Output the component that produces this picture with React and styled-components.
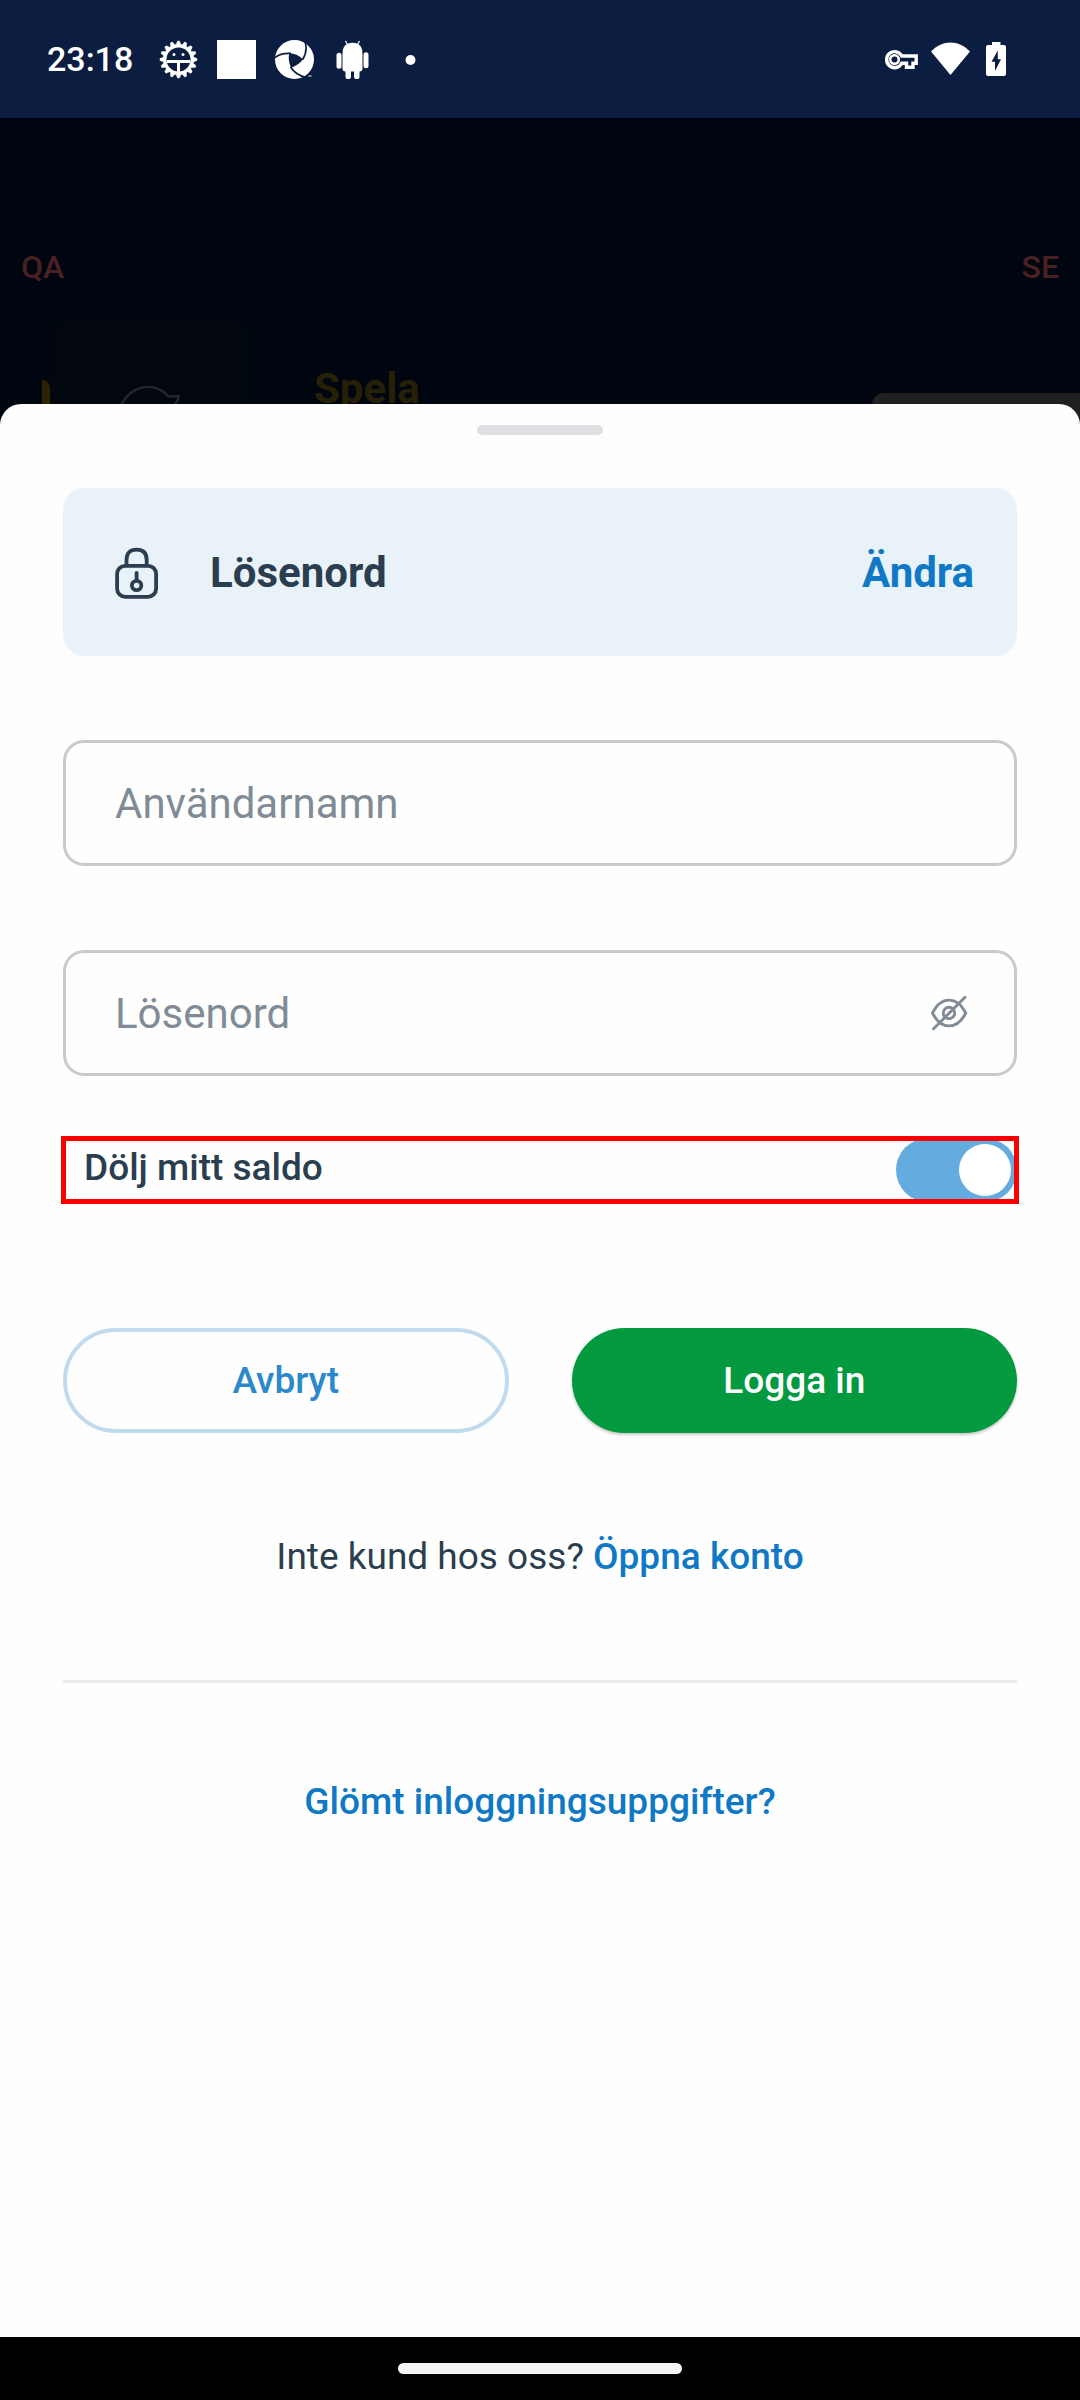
import React, { useState } from "react";
import styled, { createGlobalStyle, css } from "styled-components";

const color = {
  navy: "#0b1d40",
  backdrop: "#000610",
  sheet: "#fefefe",
  ink: "#2b3e50",
  muted: "#808b96",
  link: "#0f79c6",
  pale: "#e9f2f9",
};

const GlobalStyle = createGlobalStyle`
  *, *::before, *::after { box-sizing: border-box; }
  body {
    margin: 0;
    background: #000;
    color: ${color.ink};
    font-family: Roboto, "Liberation Sans", sans-serif;
  }
  button, input { font: inherit; }
`;

const Screen = styled.div`
  min-height: 100vh;
  display: flex;
  flex-direction: column;
`;

const StatusBar = styled.header`
  display: flex;
  justify-content: space-between;
  align-items: center;
  height: 118px;
  padding: 0 68px 0 47px;
  background: ${color.navy};
  color: #fff;
`;

const StatusGroup = styled.div`
  display: flex;
  align-items: center;
  gap: ${(p) => p.$gap}px;
`;

const Clock = styled.time`
  width: 93px;
  font-size: 34px;
  line-height: 44px;
  font-weight: 500;
  white-space: nowrap;
`;

const Glyph = styled.svg`
  display: block;
  flex: none;
  width: ${(p) => p.$w || 39}px;
  height: ${(p) => p.$h || 39}px;
`;

const Backdrop = styled.div`
  height: 307px;
  padding-top: 130px;
  overflow: hidden;
  background: ${color.backdrop};
`;

const EnvRow = styled.div`
  display: flex;
  justify-content: space-between;
  padding: 0 21px;
  color: #4a2023;
  font-size: 32px;
  line-height: 38px;
  font-weight: 500;
`;

const PromoRow = styled.div`
  display: flex;
  align-items: flex-start;
  padding: 33px 0 0 42px;
`;

const PromoMark = styled.div`
  width: 8px;
  height: 50px;
  margin-top: 61px;
  border-top-right-radius: 8px;
  background: #2a2403;
`;

const PromoTile = styled.div`
  display: flex;
  justify-content: center;
  width: 200px;
  height: 160px;
  padding-top: 67px;
  border-radius: 21px;
  background: #02060d;
`;

const PromoTitle = styled.div`
  margin: 45px 0 0 64px;
  color: #262007;
  font-size: 42px;
  line-height: 50px;
  font-weight: 700;
`;

const PromoPanel = styled.div`
  width: 208px;
  height: 90px;
  margin: 74px 0 0 auto;
  border-top-left-radius: 12px;
  background: #202020;
`;

const Sheet = styled.main`
  position: relative;
  flex: 1;
  display: flex;
  flex-direction: column;
  margin-top: -21px;
  padding: 21px 63px 63px;
  border-radius: 21px 21px 0 0;
  background: ${color.sheet};
`;

const Grabber = styled.div`
  align-self: center;
  width: 126px;
  height: 10px;
  border-radius: 5px;
  background: #dfe0e3;
`;

const MethodCard = styled.section`
  display: flex;
  align-items: center;
  height: 168px;
  margin-top: 53px;
  padding: 1px 43px 0 52px;
  border-radius: 21px;
  background: ${color.pale};
`;

const MethodTitle = styled.h1`
  flex: 1;
  margin: 0 0 0 51px;
  font-size: 42px;
  line-height: 50px;
  font-weight: 700;
`;

const textLink = css`
  color: ${color.link};
  text-decoration: none;
`;

const ChangeLink = styled.a`
  ${textLink}
  font-size: 42px;
  line-height: 50px;
  font-weight: 700;
`;

const Form = styled.form`
  display: flex;
  flex-direction: column;
  margin-bottom: 102px;
`;

const Field = styled.div`
  display: flex;
  align-items: center;
  height: 126px;
  margin-top: 84px;
  padding: 0 46px 0 49px;
  border: 3px solid #cacaca;
  border-radius: 21px;
`;

const TextInput = styled.input`
  flex: 1;
  min-width: 0;
  padding: 2px 0 0;
  border: 0;
  outline: 0;
  background: transparent;
  color: ${color.ink};
  font-size: 42px;
  line-height: 50px;

  &::placeholder {
    color: ${color.muted};
    opacity: 1;
  }
`;

const IconButton = styled.button`
  display: flex;
  padding: 0;
  border: 0;
  background: none;
  color: ${color.muted};
  cursor: pointer;
`;

const ToggleRow = styled.label`
  display: flex;
  justify-content: space-between;
  align-items: flex-start;
  height: 64px;
  margin-top: 62px;
  padding-left: 21px;
  outline: 5px solid #f80000;
  outline-offset: -3px;
  font-size: 37px;
  line-height: 60px;
  font-weight: 500;
`;

const Switch = styled.input.attrs({ type: "checkbox", role: "switch" })`
  appearance: none;
  display: flex;
  align-items: center;
  justify-content: flex-start;
  width: 121px;
  height: 64px;
  margin: 0;
  padding: 0 6px;
  border-radius: 32px;
  background: #c4ccd4;
  cursor: pointer;

  &::before {
    content: "";
    width: 52px;
    height: 52px;
    border-radius: 50%;
    background: #fff;
  }

  &:checked {
    justify-content: flex-end;
    background: #64abe0;
  }
`;

const Actions = styled.div`
  display: grid;
  grid-template-columns: 1fr 1fr;
  gap: 63px;
  margin-top: 126px;
`;

const PillButton = styled.button`
  height: 105px;
  padding: 0;
  border-radius: 53px;
  font-size: 37px;
  line-height: 44px;
  font-weight: 500;
  cursor: pointer;
  ${(p) =>
    p.$primary
      ? css`
          border: 0;
          background: #039a3f;
          color: #fff;
          box-shadow: 0 2px 3px rgba(0, 0, 0, 0.22);
        `
      : css`
          border: 4px solid #c1dbee;
          background: transparent;
          color: #2b88cc;
        `}
`;

const Prompt = styled.p`
  margin: 0;
  font-size: 37px;
  line-height: 44px;
  text-align: center;
`;

const StrongLink = styled.a`
  ${textLink}
  font-weight: 500;
`;

const Divider = styled.hr`
  width: 100%;
  height: 3px;
  margin: 101px 0 97px;
  border: 0;
  background: #eaebeb;
`;

const NavBar = styled.footer`
  display: flex;
  justify-content: center;
  align-items: center;
  height: 63px;
  background: #000;
`;

const HomePill = styled.div`
  width: 284px;
  height: 11px;
  border-radius: 6px;
  background: #f4f4f4;
`;

const gearPoints = Array.from({ length: 64 }, (_, i) => {
  const phase = i % 4;
  const r = phase < 2 ? 18.5 : 15.2;
  const a = ((i - 0.5) / 64) * Math.PI * 2 - Math.PI / 2;
  return `${(19.5 + r * Math.cos(a)).toFixed(2)},${(19.5 + r * Math.sin(a)).toFixed(2)}`;
}).join(" ");

function GearIcon() {
  return (
    <Glyph viewBox="0 0 39 39" aria-hidden="true">
      <polygon points={gearPoints} fill="#fff" stroke="#fff" strokeWidth="0.6" strokeLinejoin="round" />
      <circle cx="19.5" cy="19.5" r="12" fill={color.navy} />
      <path d="M8 21.5h23M19.5 21.5v11" stroke="#fff" strokeWidth="3" />
      <circle cx="15" cy="14.5" r="1.5" fill="#fff" />
      <circle cx="24" cy="14.5" r="1.5" fill="#fff" />
    </Glyph>
  );
}

function SquareIcon() {
  return (
    <Glyph viewBox="0 0 39 39" aria-hidden="true">
      <rect width="39" height="39" fill="#fff" />
    </Glyph>
  );
}

function SwirlIcon() {
  return (
    <Glyph viewBox="0 0 39 39" aria-hidden="true">
      <circle cx="19.5" cy="19.5" r="19.5" fill="#fff" />
      <path d="M14.3 13.3Q22 13.5 28 19.3Q23.5 25.5 16 27.7Q12.6 20.5 14.3 13.3Z" fill={color.navy} />
      <path
        d="M0 17.5Q6 12.6 16 13.4M30 1.5Q33 11 27.6 19.6M15.6 27Q20 34.5 31 37.5"
        fill="none"
        stroke={color.navy}
        strokeWidth="1.7"
      />
      <path d="M33 35.5L39 30V39H32Z" fill={color.navy} />
      <path d="M33.5 36h3" stroke="#fff" strokeWidth="1" />
    </Glyph>
  );
}

function AndroidIcon() {
  return (
    <Glyph viewBox="0 0 39 39" fill="#fff" aria-hidden="true">
      <path d="M9.5 14.5C9.5 6 13 2.8 19.5 2.8S29.5 6 29.5 14.5V28.5Q29.5 31.5 26.5 31.5H12.5Q9.5 31.5 9.5 28.5Z" />
      <rect x="3.5" y="12.8" width="5" height="16" rx="2.5" />
      <rect x="30.5" y="12.2" width="5" height="16" rx="2.5" />
      <rect x="12.5" y="28" width="5.5" height="11" rx="2.6" />
      <rect x="21" y="28" width="5.5" height="11" rx="2.6" />
      <path d="M12.5 1L14.5 4.5M26.5 1L24.5 4.5" stroke="#fff" strokeWidth="1.2" />
    </Glyph>
  );
}

function DotIcon() {
  return (
    <Glyph viewBox="0 0 39 39" aria-hidden="true">
      <circle cx="19.5" cy="20" r="5" fill="#fff" />
    </Glyph>
  );
}

function KeyIcon() {
  return (
    <Glyph $w={37} viewBox="0 0 37 39" fill="none" stroke="#fff" strokeWidth="3.4" aria-hidden="true">
      <path d="M17.8 16H32.2V23.3H29V27.2H22.5V23.3H17.8A8 8 0 1 1 17.8 16Z" />
      <circle cx="10.5" cy="19.6" r="4.3" strokeWidth="2.6" />
    </Glyph>
  );
}

function WifiIcon() {
  return (
    <Glyph viewBox="0 0 39 39" aria-hidden="true">
      <path d="M0 11.5C11.5 -.5 27.5 -.5 39 11.5L19.5 35Z" fill="#fff" />
    </Glyph>
  );
}

function BatteryIcon() {
  return (
    <Glyph $w={32} viewBox="0 0 32 39" aria-hidden="true">
      <path
        d="M12 2H20.5V5H24Q26 5 26 7V34Q26 36 24 36H8Q6 36 6 34V7Q6 5 8 5H12Z"
        fill="#fff"
      />
      <path d="M17.8 10.5L11.5 21.8H15V31L21 19.2H17.8Z" fill={color.navy} />
    </Glyph>
  );
}

function LeafIcon() {
  return (
    <Glyph $w={60} $h={40} viewBox="0 0 60 40" fill="none" stroke="#20262b" strokeWidth="2.5" aria-hidden="true">
      <path d="M1 19C14 -4 36 -3 48 10Q54 11 59 10Q57 18 50 24" />
    </Glyph>
  );
}

function LockIcon() {
  return (
    <Glyph
      $w={44}
      $h={52}
      viewBox="0 0 44 52"
      fill="none"
      stroke={color.ink}
      strokeWidth="3.8"
      strokeLinecap="round"
      aria-hidden="true"
    >
      <rect x="2.1" y="18.8" width="39" height="31" rx="8" />
      <path d="M11.5 18V13Q11.500 2.600 21.600 2.600T31.700 13V18" />
      <path d="M21.600 26V33" />
      <circle cx="21.600" cy="38.500" r="4.700" />
    </Glyph>
  );
}

function EyeOffIcon() {
  return (
    <Glyph
      $w={38}
      $h={38}
      viewBox="0 0 38 38"
      fill="none"
      stroke="currentColor"
      strokeWidth="2.900"
      strokeLinecap="round"
      strokeLinejoin="round"
      aria-hidden="true"
    >
      <path d="M2.500 19C11 1.800 27 1.800 35.800 19C27 36.200 11 36.200 2.500 19Z" />
      <circle cx="19" cy="19" r="5.700" />
      <path d="M3.500 34.800L35 3.300" />
    </Glyph>
  );
}

export default function App() {
  const [hidden, setHidden] = useState(true);
  const [showPassword, setShowPassword] = useState(false);

  return (
    <>
      <GlobalStyle />
      <Screen>
        <StatusBar>
          <StatusGroup $gap={19}>
            <Clock>23:18</Clock>
            <GearIcon />
            <SquareIcon />
            <SwirlIcon />
            <AndroidIcon />
            <DotIcon />
          </StatusGroup>
          <StatusGroup $gap={10}>
            <KeyIcon />
            <WifiIcon />
            <BatteryIcon />
          </StatusGroup>
        </StatusBar>

        <Backdrop>
          <EnvRow>
            <span>QA</span>
            <span>SE</span>
          </EnvRow>
          <PromoRow>
            <PromoMark />
            <PromoTile>
              <LeafIcon />
            </PromoTile>
            <PromoTitle>Spela</PromoTitle>
            <PromoPanel />
          </PromoRow>
        </Backdrop>

        <Sheet>
          <Grabber />
          <MethodCard>
            <LockIcon />
            <MethodTitle>Lösenord</MethodTitle>
            <ChangeLink href="#andra">Ändra</ChangeLink>
          </MethodCard>

          <Form onSubmit={(e) => e.preventDefault()}>
            <Field>
              <TextInput type="text" placeholder="Användarnamn" aria-label="Användarnamn" />
            </Field>
            <Field>
              <TextInput
                type={showPassword ? "text" : "password"}
                placeholder="Lösenord"
                aria-label="Lösenord"
              />
              <IconButton
                type="button"
                aria-label="Visa lösenord"
                onClick={() => setShowPassword(!showPassword)}
              >
                <EyeOffIcon />
              </IconButton>
            </Field>
            <ToggleRow>
              Dölj mitt saldo
              <Switch checked={hidden} onChange={(e) => setHidden(e.target.checked)} />
            </ToggleRow>
            <Actions>
              <PillButton type="button">Avbryt</PillButton>
              <PillButton type="submit" $primary>
                Logga in
              </PillButton>
            </Actions>
          </Form>

          <Prompt>
            Inte kund hos oss? <StrongLink href="#konto">Öppna konto</StrongLink>
          </Prompt>
          <Divider />
          <Prompt>
            <StrongLink href="#glomt">Glömt inloggningsuppgifter?</StrongLink>
          </Prompt>
        </Sheet>

        <NavBar>
          <HomePill />
        </NavBar>
      </Screen>
    </>
  );
}
